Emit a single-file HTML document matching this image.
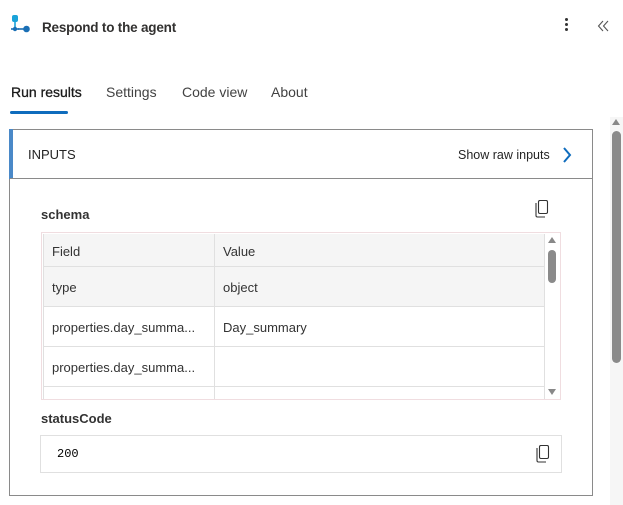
<!DOCTYPE html>
<html><head><style>
*{margin:0;padding:0;box-sizing:border-box}
body{width:623px;height:505px;overflow:hidden;background:#fff;font-family:"Segoe UI","Liberation Sans",sans-serif;color:#242424;position:relative}
.a{position:absolute}
.tab{position:absolute;top:84px;font-size:14px;color:#424242}
.cell{position:absolute;font-size:13px;color:#333;line-height:40px;padding-left:9px}
</style></head><body>
<svg class="a" style="left:10px;top:14px" width="22" height="22" viewBox="0 0 22 22">
<rect x="2" y="1" width="6" height="7" rx="2" fill="#1aa3d9"/>
<rect x="4.2" y="7" width="1.6" height="8" fill="#1aa3d9"/>
<rect x="1" y="14.2" width="8" height="1.6" fill="#1a6fb5"/>
<circle cx="5" cy="15" r="2.2" fill="#1a6fb5"/>
<rect x="8" y="14.2" width="6" height="1.6" fill="#1a6fb5"/>
<circle cx="16.5" cy="15" r="3.3" fill="#1a6fb5"/>
</svg>
<div class="a" style="left:42px;top:20px;font-size:13.5px;font-weight:600;color:#323130;letter-spacing:-0.2px">Respond to the agent</div>
<div class="a" style="left:565px;top:18px;width:4px">
<div style="width:3px;height:3px;background:#333;border-radius:50%;margin-bottom:2px"></div>
<div style="width:3px;height:3px;background:#333;border-radius:50%;margin-bottom:2px"></div>
<div style="width:3px;height:3px;background:#333;border-radius:50%"></div></div>
<svg class="a" style="left:597px;top:19px" width="14" height="14" viewBox="0 0 14 14" fill="none" stroke="#555" stroke-width="1.1"><path d="M6 2L1.5 7L6 12M11 2L6.5 7L11 12"/></svg>
<div class="tab" style="left:11px;color:#1a1a1a;-webkit-text-stroke:0.3px #1a1a1a">Run results</div>
<div class="tab" style="left:106px">Settings</div>
<div class="tab" style="left:182px">Code view</div>
<div class="tab" style="left:271px">About</div>
<div class="a" style="left:10px;top:111px;width:58px;height:3px;background:#0f6cbd;border-radius:2px"></div>
<!-- page scrollbar -->
<div class="a" style="left:610px;top:117px;width:13px;height:388px;background:#f6f6f6"></div>
<svg class="a" style="left:612px;top:119px" width="8" height="6"><path d="M0 6L4 0L8 6Z" fill="#888"/></svg>
<div class="a" style="left:612px;top:131px;width:9px;height:232px;background:#8a8a8a;border-radius:5px"></div>
<!-- card -->
<div class="a" style="left:9px;top:129px;width:584px;height:367px;border:1px solid #8a8a8a"></div>
<div class="a" style="left:9px;top:129px;width:4px;height:50px;background:#4a89c8"></div>
<div class="a" style="left:10px;top:178px;width:582px;height:1px;background:#8a8a8a"></div>
<div class="a" style="left:28px;top:147px;font-size:13px;color:#242424">INPUTS</div>
<div class="a" style="left:458px;top:148px;font-size:12.5px;color:#242424">Show raw inputs</div>
<svg class="a" style="left:562px;top:147px" width="10" height="16"><path d="M2 1L8 8L2 15" fill="none" stroke="#0f6cbd" stroke-width="2"/></svg>
<div class="a" style="left:41px;top:207px;font-size:13px;font-weight:600;color:#333">schema</div>
<svg class="a" style="left:535px;top:200px" width="14" height="18" viewBox="0 0 14 18" fill="none" stroke="#333" stroke-width="1.1"><rect x="3.5" y="0.5" width="9" height="13" rx="1.5"/><path d="M1 3V15.5Q1 17 2.5 17H10"/></svg>
<!-- table -->
<div class="a" style="left:41px;top:232px;width:520px;height:168px;border:1px solid #f0dde0;overflow:hidden">
<div class="a" style="left:1px;top:1px;width:502px;height:73px;background:#f5f5f5"></div>
<div class="a" style="left:1px;top:33px;width:502px;height:1px;background:#e0e0e0"></div>
<div class="a" style="left:1px;top:73px;width:502px;height:1px;background:#e0e0e0"></div>
<div class="a" style="left:1px;top:113px;width:502px;height:1px;background:#e0e0e0"></div>
<div class="a" style="left:1px;top:153px;width:502px;height:1px;background:#e0e0e0"></div>
<div class="a" style="left:172px;top:1px;width:1px;height:170px;background:#e0e0e0"></div>
<div class="a" style="left:1px;top:1px;width:1px;height:170px;background:#e0e0e0"></div>
<div class="a" style="left:502px;top:1px;width:1px;height:170px;background:#e0e0e0"></div>
<div class="cell" style="left:1px;top:-1px">Field</div>
<div class="cell" style="left:172px;top:-1px">Value</div>
<div class="cell" style="left:1px;top:35px">type</div>
<div class="cell" style="left:172px;top:35px">object</div>
<div class="cell" style="left:1px;top:75px">properties.day_summa...</div>
<div class="cell" style="left:172px;top:75px">Day_summary</div>
<div class="cell" style="left:1px;top:115px">properties.day_summa...</div>
<svg class="a" style="left:506px;top:4px" width="8" height="6"><path d="M0 6L4 0L8 6Z" fill="#888"/></svg>
<div class="a" style="left:506px;top:17px;width:8px;height:33px;background:#8a8a8a;border-radius:4px"></div>
<svg class="a" style="left:506px;top:156px" width="8" height="6"><path d="M0 0L4 6L8 0Z" fill="#888"/></svg>
</div>
<div class="a" style="left:41px;top:411px;font-size:13px;font-weight:600;color:#333">statusCode</div>
<div class="a" style="left:40px;top:435px;width:522px;height:38px;border:1px solid #e0e0e0"></div>
<div class="a" style="left:57px;top:447px;font-family:'Liberation Mono',monospace;font-size:12px;color:#000">200</div>
<svg class="a" style="left:536px;top:445px" width="14" height="18" viewBox="0 0 14 18" fill="none" stroke="#333" stroke-width="1.1"><rect x="3.5" y="0.5" width="9" height="13" rx="1.5"/><path d="M1 3V15.5Q1 17 2.5 17H10"/></svg>
</body></html>
